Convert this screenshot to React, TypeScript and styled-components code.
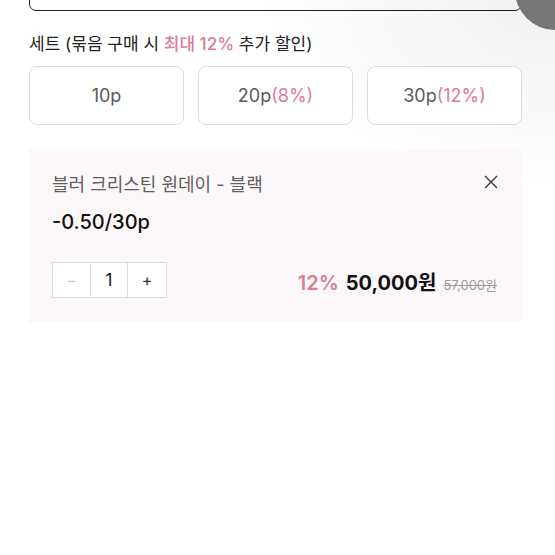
import React from "react";
import styled, { createGlobalStyle } from "styled-components";

const Global = createGlobalStyle`
  html, body { margin: 0; padding: 0; }
  body {
    width: 555px;
    height: 555px;
    overflow: hidden;
    background: radial-gradient(ellipse 300px 190px at 555px 0px, rgba(0,0,0,0.06), rgba(0,0,0,0) 100%), #ffffff;
    font-family: "Inter", "Noto Sans CJK KR", sans-serif;
    color: #222;
  }
`;

const Page = styled.div`
  position: relative;
  width: 555px;
  box-sizing: border-box;
  overflow: hidden;
  padding: 0 33px 0 29px;
  display: flex;
  flex-direction: column;
`;

const TopBox = styled.div`
  margin-top: -30px;
  height: 39px;
  border: 1.5px solid #1e1e1e;
  border-radius: 7px;
  background: transparent;
`;

const FloatClip = styled.div`
  position: absolute;
  right: 0;
  top: 0;
  width: 40px;
  height: 31px;
  overflow: hidden;
`;

const FloatBlob = styled.div`
  width: 80px;
  height: 80px;
  margin-top: -50px;
  border-radius: 50%;
  background: #767676;
`;

const Heading = styled.div`
  margin-top: 21px;
  font-size: 17px;
  line-height: 24px;
  color: #222;
`;

const Pink = styled.span<{ $weight?: number }>`
  color: #d97c9c;
  font-weight: ${(p) => p.$weight ?? 400};
`;

const SetRow = styled.div`
  margin-top: 10px;
  display: grid;
  grid-template-columns: repeat(3, 1fr);
  gap: 14px;
`;

const SetButton = styled.button`
  height: 59px;
  background: #fff;
  border: 1px solid #dcdcdc;
  border-radius: 8px;
  font-family: inherit;
  font-size: 18px;
  color: #5a5a5a;
  display: flex;
  align-items: center;
  justify-content: center;
  padding: 0;
`;

const Card = styled.div`
  margin-top: 25px;
  background: #fcf8f9;
  padding: 23px 25px 24px 23px;
  display: flex;
  flex-direction: column;
`;

const TitleRow = styled.div`
  display: flex;
  align-items: center;
  justify-content: space-between;
`;

const Title = styled.div`
  font-size: 18px;
  line-height: 24px;
  color: #5e5e5e;
`;

const CloseBtn = styled.div`
  width: 16px;
  height: 16px;
  margin-right: -2px;
  margin-top: -6px;
  display: flex;
`;

const OptionText = styled.div`
  margin-top: 12px;
  font-size: 20px;
  line-height: 26px;
  color: #111;
  font-weight: 500;
`;

const BottomRow = styled.div`
  margin-top: 27px;
  display: flex;
  align-items: center;
  justify-content: space-between;
`;

const Stepper = styled.div`
  display: flex;
  border: 1px solid #dcdcdc;
  background: #fff;
  height: 36px;
  box-sizing: border-box;
`;

const StepCell = styled.div<{ $w: number; $color: string; $divider?: boolean }>`
  width: ${(p) => p.$w}px;
  display: flex;
  align-items: center;
  justify-content: center;
  font-size: ${(p) => (p.$divider ? 17 : 16)}px;
  color: ${(p) => p.$color};
  border-left: ${(p) => (p.$divider ? "1px solid #dcdcdc" : "none")};
  border-right: ${(p) => (p.$divider ? "1px solid #dcdcdc" : "none")};
`;

const Price = styled.div`
  display: flex;
  align-items: baseline;
  gap: 7px;
  margin-top: 3px;
`;

const Rate = styled.span`
  font-size: 20px;
  font-weight: 600;
  color: #d97c9c;
`;

const Amount = styled.span`
  font-size: 20px;
  font-weight: 700;
  color: #111;
`;

const Original = styled.span`
  font-size: 13px;
  color: #9a9a9a;
  text-decoration: line-through;
`;

export default function App() {
  return (
    <>
      <Global />
      <Page>
        <FloatClip>
          <FloatBlob />
        </FloatClip>
        <TopBox />
        <Heading>
          세트 (묶음 구매 시 <Pink $weight={500}>최대 12%</Pink> 추가 할인)
        </Heading>
        <SetRow>
          <SetButton>10p</SetButton>
          <SetButton>
            20p<Pink>(8%)</Pink>
          </SetButton>
          <SetButton>
            30p<Pink>(12%)</Pink>
          </SetButton>
        </SetRow>
        <Card>
          <TitleRow>
            <Title>블러 크리스틴 원데이 - 블랙</Title>
            <CloseBtn>
              <svg width="16" height="16" viewBox="0 0 16 16">
                <path d="M2 2 L14 14 M14 2 L2 14" stroke="#333" strokeWidth="1.3" fill="none" />
              </svg>
            </CloseBtn>
          </TitleRow>
          <OptionText>-0.50/30p</OptionText>
          <BottomRow>
            <Stepper>
              <StepCell $w={37} $color="#c8c8c8">−</StepCell>
              <StepCell $w={36} $color="#111" $divider>1</StepCell>
              <StepCell $w={38} $color="#333">+</StepCell>
            </Stepper>
            <Price>
              <Rate>12%</Rate>
              <Amount>50,000원</Amount>
              <Original>57,000원</Original>
            </Price>
          </BottomRow>
        </Card>
      </Page>
    </>
  );
}
